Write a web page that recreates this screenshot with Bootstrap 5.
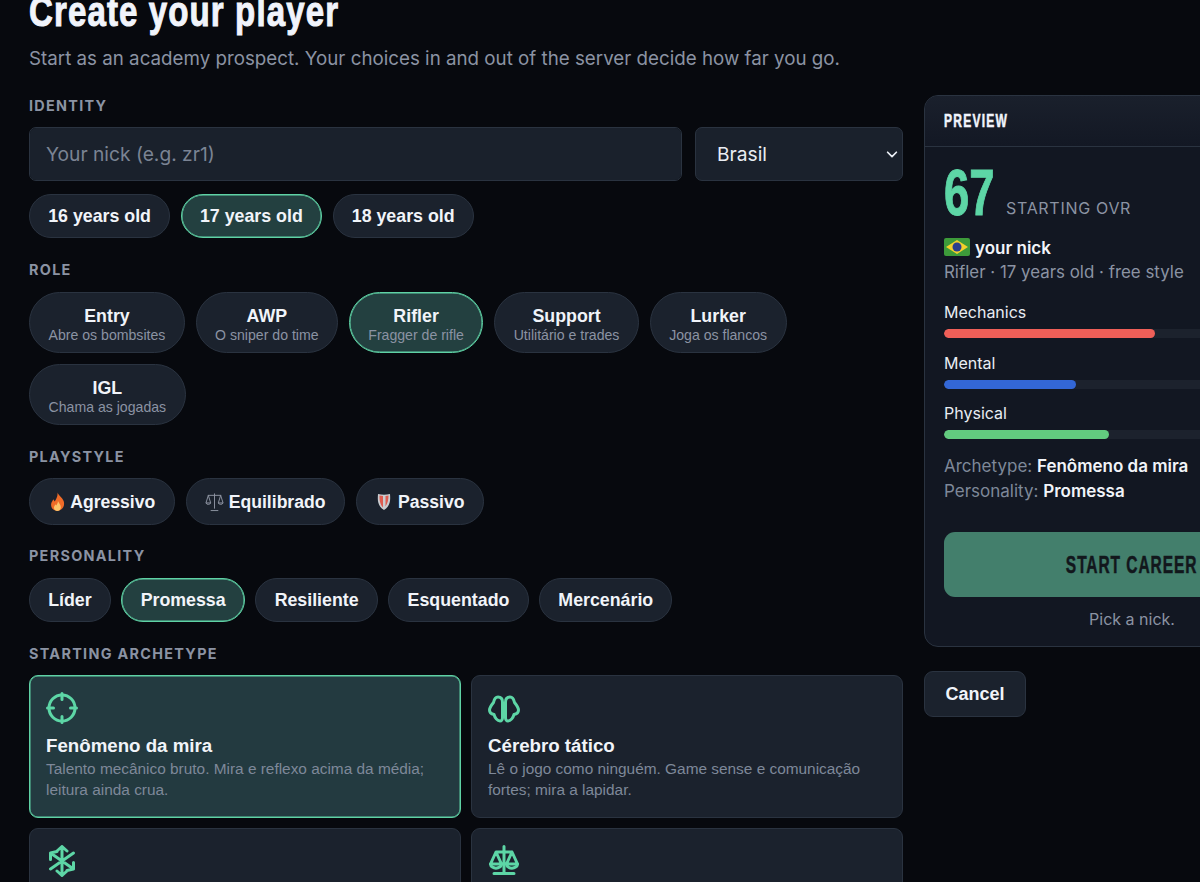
<!DOCTYPE html>
<html lang="en">
<head>
<meta charset="utf-8">
<title>Create your player</title>
<link href="https://cdn.jsdelivr.net/npm/bootstrap@5.3.0/dist/css/bootstrap.min.css" rel="stylesheet">
<style>
html,body{height:100%;overflow:hidden}
body{background:#07090e;color:#f1f4f9;font-family:Inter,"Noto Sans",sans-serif}
.shell{display:flex;gap:21px;padding-left:29px;width:1400px}
.main-col{width:874px;flex:none}
.side-col{width:416px;flex:none;padding-top:95px}
.squeeze{display:inline-block;font-family:"Liberation Sans",Arial,sans-serif;font-weight:700;-webkit-text-stroke:.5px currentColor;white-space:nowrap}
.page-title{font-size:42px;line-height:48px;margin:-13px 0 0;white-space:nowrap}
.page-title .squeeze{letter-spacing:1.4px;color:#f1f4fb;transform:scaleX(.787);transform-origin:left center;-webkit-text-stroke:1px currentColor}
.page-sub{font-size:18.75px;line-height:27px;color:#8b93a3;margin:9px 0 24px;white-space:nowrap}
.sec-label{font-size:14.4px;line-height:20px;font-weight:700;letter-spacing:1.3px;color:#8b93a3;text-transform:uppercase;margin:0 0 12px}
.sec-tight{margin-bottom:11px}
.nick-row{display:flex;gap:13px;margin-bottom:13px}
.nick-input.form-control,.nat-select.form-select{height:54px;font-size:19.2px;color:#e9edf3;background-color:#1a212c;border:1px solid #2a3340;border-radius:7px}
.nick-input.form-control{padding-left:16px}
.nick-input::placeholder{color:#7b8494;opacity:1}
.nat-select.form-select{width:208px;flex:none;padding-left:21px;background-image:url("data:image/svg+xml,%3csvg xmlns='http://www.w3.org/2000/svg' viewBox='0 0 16 16'%3e%3cpath fill='none' stroke='%23e9edf3' stroke-linecap='round' stroke-linejoin='round' stroke-width='2' d='m3 6 5 5 5-5'/%3e%3c/svg%3e");background-size:14px;background-position:right 3px center}
.pill-row{display:flex;flex-wrap:wrap;gap:11px 10.6px}
.pill-btn.btn{--bs-btn-bg:#1b222d;--bs-btn-border-color:#2a3340;--bs-btn-color:#f1f4f9;font-family:"Liberation Sans",Arial,sans-serif;font-weight:700;font-size:17.8px;line-height:24px;padding:9px 18.2px;border-radius:24px;height:44px}
.pill-btn.is-on{background:#234040;border-color:#5fd2a5;box-shadow:inset 0 0 0 .5px #5fd2a5}
.pill-emoji.btn{height:47px;padding:10px 18.7px;font-size:17.6px;display:inline-flex;align-items:center;gap:4.5px}
.pill-emoji svg{flex:none}
.role-btn.btn{height:61px;padding:2px 18.6px 0;line-height:1;text-align:center;border-radius:31px}
.role-btn b{display:block;font-size:17.8px;line-height:22px}
.role-btn span{display:block;font-size:14.1px;font-weight:400;line-height:16px;color:#8b93a3}
.arche-grid{display:grid;grid-template-columns:432px 432px;gap:10px}
.arche-card{background:#1b222d;border:1px solid #2a3340;border-radius:9px;height:143px;padding:16px}
.arche-card.is-on{background:#233a40;border-color:#5fd2a5;box-shadow:inset 0 0 0 .5px #5fd2a5}
.arche-card svg{display:block;margin-bottom:10px}
.arche-name{font-family:"Liberation Sans",Arial,sans-serif;font-weight:700;font-size:18.7px;line-height:23px;color:#f1f4f9;margin-bottom:1px}
.arche-desc{font-family:"Liberation Sans",Arial,sans-serif;font-size:15.4px;line-height:21px;color:#7e8899;margin:0}
.prev-card.card{--bs-card-bg:#121722;--bs-card-border-color:#2a3340;border-radius:14px;height:552px}
.prev-card .card-header{height:51px;padding:0 19px;display:flex;align-items:center;background:linear-gradient(#1a202c,#131824);border-bottom:1px solid #2a3340;border-radius:13px 13px 0 0}
.prev-title{font-size:18px;letter-spacing:1.8px;color:#f1f4fb;transform:scaleX(.67);transform-origin:left center}
.prev-card .card-body{padding:0 19px}
.ovr-num{font-size:64px;line-height:64px;color:#5dd6a6;width:62px;transform:scaleX(.71);transform-origin:left center;-webkit-text-stroke:1px currentColor}
.ovr-cap{font-size:16px;letter-spacing:.7px;color:#8b93a3;line-height:20px;margin-bottom:7px}
.ovr-line{display:flex;align-items:flex-end;padding-top:18px;height:78px}
.nick-line{display:flex;align-items:center;gap:5px;font-weight:600;font-size:17px;line-height:24px;margin-top:11px}
.nick-line svg{margin-bottom:3px}
.meta-line{font-size:16.9px;line-height:24px;color:#8b93a3}
.stat-name{font-size:16px;line-height:22px;color:#e9edf3;margin-bottom:6px}
.stat-block{margin-bottom:13.5px}
.stats-wrap{margin-top:17px}
.stat-bar.progress{--bs-progress-bg:#1c222d;--bs-progress-height:9px;--bs-progress-border-radius:5px}
.fill-red{background:#ef5f58;border-radius:5px}
.fill-blue{background:#3367d6;border-radius:5px}
.fill-green{background:#62cb7f;border-radius:5px}
.kv-line{font-size:17px;line-height:25px;color:#7e8899}
.kv-line b{color:#f1f4f9;font-weight:600}
.kv-first{margin-top:15px}
.start-btn.btn{display:block;width:376px;height:65px;margin-top:28px;padding-top:9px;background:#437f6c;border:0;border-radius:11px;color:#12171c}
.start-btn .squeeze{font-size:23.5px;letter-spacing:1.4px;transform:scaleX(.66)}
.hint-line{text-align:center;width:376px;font-size:16px;color:#8b93a3;line-height:22px;margin-top:11px}
.cancel-btn.btn{--bs-btn-bg:#1b222d;--bs-btn-border-color:#2a3340;--bs-btn-color:#f1f4f9;margin-top:24px;height:46px;width:102px;padding:0;font-family:"Liberation Sans",Arial,sans-serif;font-weight:700;font-size:18px;border-radius:9px}
.sec-gap-a{margin-top:22px}
.sec-gap-b{margin-top:21px}
.sec-gap-c{margin-top:22px}
.ico{stroke:#5dd6a6;fill:none;stroke-width:3;stroke-linecap:round;stroke-linejoin:round}
</style>
</head>
<body>
<div class="shell">
  <div class="main-col">
    <h1 class="page-title"><span class="squeeze">Create your player</span></h1>
    <p class="page-sub">Start as an academy prospect. Your choices in and out of the server decide how far you go.</p>

    <div class="sec-label sec-tight">Identity</div>
    <div class="nick-row">
      <input class="form-control nick-input" placeholder="Your nick (e.g. zr1)">
      <select class="form-select nat-select"><option>Brasil</option></select>
    </div>
    <div class="pill-row">
      <button class="btn pill-btn">16 years old</button>
      <button class="btn pill-btn is-on">17 years old</button>
      <button class="btn pill-btn">18 years old</button>
    </div>

    <div class="sec-label sec-gap-a">Role</div>
    <div class="pill-row">
      <button class="btn pill-btn role-btn"><b>Entry</b><span>Abre os bombsites</span></button>
      <button class="btn pill-btn role-btn"><b>AWP</b><span>O sniper do time</span></button>
      <button class="btn pill-btn role-btn is-on"><b>Rifler</b><span>Fragger de rifle</span></button>
      <button class="btn pill-btn role-btn"><b>Support</b><span>Utilitário e trades</span></button>
      <button class="btn pill-btn role-btn"><b>Lurker</b><span>Joga os flancos</span></button>
      <button class="btn pill-btn role-btn"><b>IGL</b><span>Chama as jogadas</span></button>
    </div>

    <div class="sec-label sec-tight sec-gap-a">Playstyle</div>
    <div class="pill-row">
      <button class="btn pill-btn pill-emoji">
        <svg width="17" height="20" viewBox="0 0 18 20"><path d="M9 0c1 3 5 5 6.500 9 1.200 3.500.5 9-6.500 10.500C3 19 1.500 14.500 2.500 11c.5-1.500 1.500-2.500 2-4 .8 1 1.200 1.800 1.500 2.500C7.500 7 9.500 4 9 0z" fill="#ef6b28"/><path d="M9.500 9c.5 2 3 3.500 3 6.500 0 2.500-1.800 4-3.700 4-2.300 0-3.800-1.800-3.500-4 .3-1.500 1.200-2 1.700-3 .3.500.5 1 .7 1.300.8-1.300 1.800-2.800 1.800-4.800z" fill="#fbc56a"/></svg>
        Agressivo</button>
      <button class="btn pill-btn pill-emoji">
        <svg width="19" height="20" viewBox="0 0 20 20" fill="none" stroke="#8f96a3" stroke-width="1"><path d="M10 1v16M3 3h14M6 19h8M3.500 3 1 11h5zM16.500 3 14 11h5z"/><path d="M1 11c.5 2 4.500 2 5 0M14 11c.5 2 4.500 2 5 0"/></svg>
        Equilibrado</button>
      <button class="btn pill-btn pill-emoji">
        <svg width="18" height="20" viewBox="-1 0 18 20"><path d="M2 2c4 1 8 1 12 0 .5 6 .5 12-6 16C1.500 14 1.500 8 2 2z" fill="#c9ccd0"/><path d="M3.500 3.500c1.500.3 2.500.4 3.500.5v11.500C4 12.500 3.300 8 3.500 3.500z" fill="#dd5c50"/><path d="M9.500 4c1 0 2-.2 3-.5 0 4-.8 8-3 11z" fill="#dd5c50"/></svg>
        Passivo</button>
    </div>

    <div class="sec-label sec-gap-b">Personality</div>
    <div class="pill-row">
      <button class="btn pill-btn">Líder</button>
      <button class="btn pill-btn is-on">Promessa</button>
      <button class="btn pill-btn">Resiliente</button>
      <button class="btn pill-btn">Esquentado</button>
      <button class="btn pill-btn">Mercenário</button>
    </div>

    <div class="sec-label sec-tight sec-gap-c">Starting archetype</div>
    <div class="arche-grid">
      <div class="arche-card is-on">
        <svg class="ico" width="32" height="32" viewBox="0 0 32 32"><circle cx="16" cy="16" r="13"/><path d="M16 1.500v6M16 24.500v6M1.500 16h6M24.500 16h6"/></svg>
        <div class="arche-name">Fenômeno da mira</div>
        <p class="arche-desc">Talento mecânico bruto. Mira e reflexo acima da média; leitura ainda crua.</p>
      </div>
      <div class="arche-card">
        <svg class="ico" width="32" height="32" viewBox="0 0 32 32"><path d="M14.500 10C14.500 6.500 12.500 5 10 5 7 5 6 8 5.500 10.500 3.500 13 1.500 15.500 1.500 18c0 2.500 2 4 4.500 4.500C7 26 9.500 29 12 29c1.500 0 2.500-1.500 2.500-3z"/><path d="M17.500 10C17.500 6.500 19.500 5 22 5c3 0 4 3 4.500 5.500 2 2.500 4 5 4 7.500 0 2.500-2 4-4.500 4.500C25 26 22.500 29 20 29c-1.500 0-2.500-1.500-2.500-3z"/></svg>
        <div class="arche-name">Cérebro tático</div>
        <p class="arche-desc">Lê o jogo como ninguém. Game sense e comunicação fortes; mira a lapidar.</p>
      </div>
      <div class="arche-card">
        <svg class="ico" width="32" height="32" viewBox="0 0 32 32"><path d="M16 1.500v29M4.500 8l23 16M4.500 24 27.500 8M11 6l5-4.500L21 6M11 26l5 4.500 5-4.500M4.500 14.500V8L11 6.500M27.500 17.500V24l-6.500 1.500"/></svg>
      </div>
      <div class="arche-card">
        <svg class="ico" width="32" height="32" viewBox="0 0 32 32"><path d="M16 1.500V28M6 28.500h20M8 7h16M8 7 2.500 19h11zM24 7l-5.500 12h11z"/><path d="M2.500 19c.5 5.500 10.500 5.500 11 0M18.500 19c.5 5.500 10.500 5.500 11 0"/></svg>
      </div>
    </div>
  </div>

  <div class="side-col">
    <div class="card prev-card">
      <div class="card-header"><span class="squeeze prev-title">PREVIEW</span></div>
      <div class="card-body">
        <div class="ovr-line"><span class="squeeze ovr-num">67</span><span class="ovr-cap">STARTING OVR</span></div>
        <div class="nick-line">
          <svg width="26" height="18" viewBox="0 0 26 18"><rect width="26" height="18" rx="2" fill="#3d9b3a"/><path d="M13 2 24 9 13 16 2 9z" fill="#f2d02c"/><circle cx="13" cy="9" r="4.500" fill="#2b3f8e"/></svg>
          your nick
        </div>
        <div class="meta-line">Rifler · 17 years old · free style</div>
        <div class="stats-wrap">
        <div class="stat-block"><div class="stat-name">Mechanics</div><div class="progress stat-bar"><div class="progress-bar fill-red" style="width:56%"></div></div></div>
        <div class="stat-block"><div class="stat-name">Mental</div><div class="progress stat-bar"><div class="progress-bar fill-blue" style="width:35%"></div></div></div>
        <div class="stat-block"><div class="stat-name">Physical</div><div class="progress stat-bar"><div class="progress-bar fill-green" style="width:44%"></div></div></div>
        </div>
        <div class="kv-line kv-first">Archetype: <b>Fenômeno da mira</b></div>
        <div class="kv-line">Personality: <b>Promessa</b></div>
        <button class="btn start-btn"><span class="squeeze">START CAREER</span></button>
        <div class="hint-line">Pick a nick.</div>
      </div>
    </div>
    <button class="btn cancel-btn">Cancel</button>
  </div>
</div>
</body>
</html>
